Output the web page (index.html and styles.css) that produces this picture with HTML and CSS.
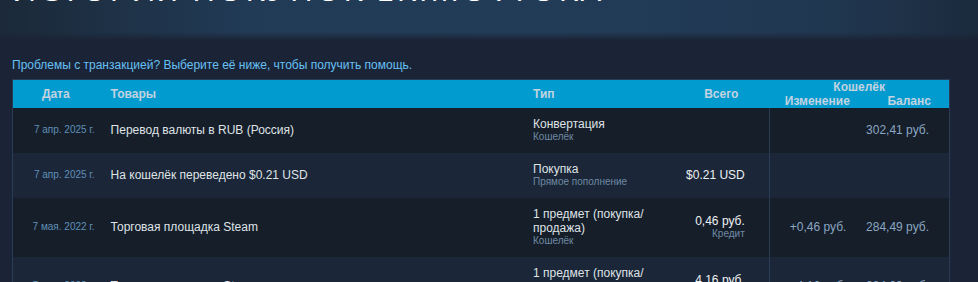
FILE: index.html
```html
<!DOCTYPE html>
<html lang="ru">
<head>
<meta charset="utf-8">
<title>История покупок</title>
<link rel="stylesheet" href="styles.css">
</head>
<body>
<header class="banner">
  <h2 class="page-title">ИСТОРИЯ ПОКУПОК EKIMOVTOKA</h2>
</header>
<main class="content">
  <p class="help"><a href="#">Проблемы с транзакцией? Выберите её ниже, чтобы получить помощь.</a></p>
  <table class="history">
    <colgroup>
      <col class="c-date"><col class="c-items"><col class="c-type"><col class="c-total"><col class="c-change"><col class="c-balance">
    </colgroup>
    <thead>
      <tr class="h1">
        <th rowspan="2" class="th-date">Дата</th>
        <th rowspan="2" class="th-items">Товары</th>
        <th rowspan="2" class="th-type">Тип</th>
        <th rowspan="2" class="th-total">Всего</th>
        <th colspan="2" class="th-wallet">Кошелёк</th>
      </tr>
      <tr class="h2">
        <th class="th-change">Изменение</th>
        <th class="th-balance">Баланс</th>
      </tr>
    </thead>
    <tbody>
      <tr class="odd">
        <td class="date">7 апр. 2025 г.</td>
        <td class="items">Перевод валюты в RUB (Россия)</td>
        <td class="type">Конвертация<div class="sub">Кошелёк</div></td>
        <td class="total"></td>
        <td class="change sep"></td>
        <td class="balance">302,41 руб.</td>
      </tr>
      <tr class="even">
        <td class="date">7 апр. 2025 г.</td>
        <td class="items">На кошелёк переведено $0.21 USD</td>
        <td class="type">Покупка<div class="sub">Прямое пополнение</div></td>
        <td class="total">$0.21 USD</td>
        <td class="change sep"></td>
        <td class="balance"></td>
      </tr>
      <tr class="odd">
        <td class="date">7 мая. 2022 г.</td>
        <td class="items">Торговая площадка Steam</td>
        <td class="type">1 предмет (покупка/ продажа)<div class="sub">Кошелёк</div></td>
        <td class="total">0,46 руб.<div class="sub">Кредит</div></td>
        <td class="change sep">+0,46 руб.</td>
        <td class="balance">284,49 руб.</td>
      </tr>
      <tr class="even">
        <td class="date">7 мая. 2022 г.</td>
        <td class="items">Торговая площадка Steam</td>
        <td class="type">1 предмет (покупка/ продажа)<div class="sub">Кошелёк</div></td>
        <td class="total">4,16 руб.<div class="sub">Кредит</div></td>
        <td class="change sep">+4,16 руб.</td>
        <td class="balance">284,03 руб.</td>
      </tr>
    </tbody>
  </table>
</main>
</body>
</html>
```
FILE: styles.css
```css
html, body {
  margin: 0;
  padding: 0;
}
body {
  background: #1b2436;
  font-family: "Liberation Sans", Arial, sans-serif;
  font-size: 12px;
  color: #dcdedf;
  overflow: hidden;
}
.banner {
  height: 40px;
  background:
    linear-gradient(to bottom, rgba(27,36,54,0) 0%, rgba(27,36,54,0) 80%, rgba(27,36,54,1) 100%),
    linear-gradient(to right, #1b2939 0%, #213a55 25%, #223c58 55%, #203750 85%, #1c2b3e 100%);
  overflow: hidden;
}
.page-title {
  margin: -27px 0 0 12px;
  font-family: "Open Sans", "Liberation Sans", sans-serif;
  font-weight: 400;
  font-size: 32px;
  line-height: 32px;
  letter-spacing: 2.6px;
  color: #ffffff;
  white-space: nowrap;
}
.content {
  padding: 0 12px;
}
.help {
  margin: 18px 0 7px;
  line-height: 14px;
}
.help a {
  color: #66c0f4;
  text-decoration: none;
}
.history {
  width: 938px;
  border-collapse: collapse;
  table-layout: fixed;
  border: 1px solid #2a3c55;
}
.c-date { width: 86px; }
.c-items { width: 422px; }
.c-type { width: 152px; }
.c-total { width: 96px; }
.c-change { width: 96px; }
.c-balance { width: 84px; }

.history thead {
  background: #019bd0;
}
.history th {
  padding: 0;
  font-weight: bold;
  color: #c3d3e0;
  line-height: 14px;
  height: 14px;
  text-align: left;
}
.th-date, .th-total, .th-wallet, .th-change, .th-balance {
  text-align: center !important;
}
.th-items, .th-type {
  padding-left: 12px !important;
}
.th-balance {
  padding-left: 4px !important;
}
.history td {
  padding: 9px 0 10px;
  vertical-align: middle;
  line-height: 14px;
}
.odd { background: #161e2a; }
.even { background: #1b2638; }
.date {
  text-align: right;
  padding-right: 4px !important;
  font-size: 10px;
  color: #5f90b8;
}
.items {
  padding-left: 12px !important;
  color: #dfe3e6;
}
.type {
  padding-left: 12px !important;
  padding-right: 12px !important;
  color: #dfe3e6;
}
.sub {
  font-size: 10px;
  line-height: 12px;
  color: #6f8aa3;
}
.total {
  text-align: right;
  padding-right: 24px !important;
  color: #eef1f3;
}
.total .sub {
  color: #6f8aa3;
}
.sep {
  border-left: 1px solid #2a3c55;
}
.change, .balance {
  text-align: right;
  padding-right: 19px !important;
  color: #8aa6c1;
}
.balance {
  padding-right: 20px !important;
}
```
